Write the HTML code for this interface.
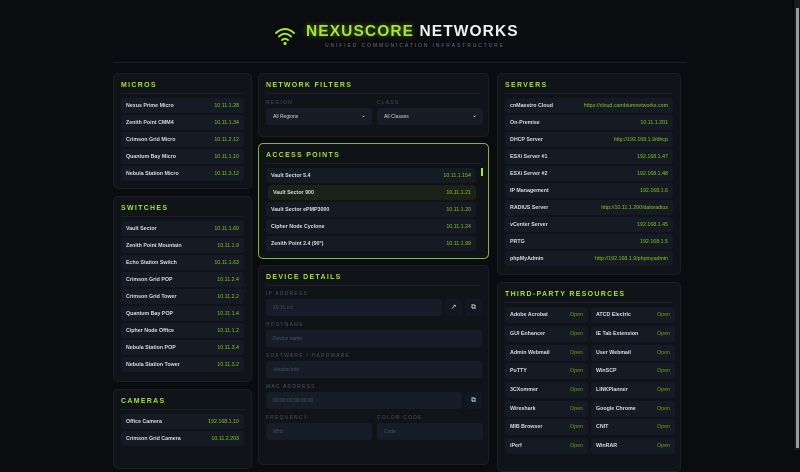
<!DOCTYPE html>
<html><head><meta charset="utf-8"><style>
*{box-sizing:border-box;margin:0;padding:0}
body{width:800px;height:450px;overflow:hidden;background:#0b0c10;font-family:"Liberation Sans",sans-serif;color:#e5e7eb;position:relative}
.sb{position:absolute;left:793px;top:0;width:7px;height:450px;background:#1a1a1a;border-left:1px solid #000}
.sb i{position:absolute;left:2px;top:8px;width:3px;height:440px;background:#9a9a9a}
.h1{position:absolute;left:306px;top:23px;font-size:15.5px;font-weight:bold;letter-spacing:1.1px;color:#f0f0f0;white-space:nowrap}
.h1 b{color:#a3e635;text-shadow:0 0 6px rgba(163,230,53,.5)}
.sub{position:absolute;left:325px;top:43px;font-size:5px;letter-spacing:1.9px;color:#6b7280;white-space:nowrap}
.hr{position:absolute;left:113px;top:62px;width:574px;height:1px;background:#1b1e26}
.p{position:absolute;background:#101318;border:1px solid #1a1e27;border-radius:5px}
.t{position:absolute;left:7px;top:8px;font-size:7px;font-weight:bold;letter-spacing:1.3px;color:#a3e635;white-space:nowrap}
.tl{position:absolute;left:7px;top:19px;right:7px;height:1px;background:#1a1e27}
.r{position:absolute;left:7px;right:7px;height:15px;background:#151a24;border-radius:3px;font-size:5.3px;font-weight:bold;color:#d8dbe2}
.r span{position:absolute;left:5px;top:5px;white-space:nowrap}
.r em{position:absolute;right:5px;top:5px;font-style:normal;font-weight:normal;color:#84cc16;white-space:nowrap}
.lb{position:absolute;font-size:5px;letter-spacing:1.2px;color:#4b5160;white-space:nowrap}
.in{position:absolute;height:17px;background:#171c28;border-radius:3px;font-size:5px;color:#4b5160;padding:6px 7px;white-space:nowrap}
.bt{position:absolute;width:17px;height:17px;background:#131722;border-radius:3px;color:#cfd3da;font-size:7px;text-align:center;line-height:17px}
.g{position:absolute;height:16px;background:#151a24;border-radius:3px;font-size:5.3px;font-weight:bold;color:#d8dbe2}
.g span{position:absolute;left:5px;top:5px;white-space:nowrap}
.g em{position:absolute;right:5px;top:5px;font-style:normal;font-weight:normal;color:#65a30d}
</style></head><body>
<div class="sb"><i></i></div>
<svg style="position:absolute;left:274px;top:25px" width="22" height="21" viewBox="0 0 22 21"><g fill="none" stroke="#a3e635" stroke-width="2" stroke-linecap="round"><path d="M2 8 Q11 0 20 8"/><path d="M5 11.5 Q11 6 17 11.5"/><path d="M8 15 Q11 12.5 14 15"/></g><circle cx="11" cy="18.5" r="1.6" fill="#a3e635"/></svg>
<div class="h1"><b>NEXUSCORE</b> NETWORKS</div>
<div class="sub">UNIFIED COMMUNICATION INFRASTRUCTURE</div>
<div class="hr"></div>

<div class="p" style="left:113px;top:73px;width:139px;height:116px"><div class="t">MICROS</div><div class="tl"></div>
<div class="r" style="top:24px"><span>Nexus Prime Micro</span><em>10.11.1.28</em></div>
<div class="r" style="top:41px"><span>Zenith Point CMM4</span><em>10.11.1.34</em></div>
<div class="r" style="top:58px"><span>Crimson Grid Micro</span><em>10.11.2.12</em></div>
<div class="r" style="top:75px"><span>Quantum Bay Micro</span><em>10.11.1.10</em></div>
<div class="r" style="top:92px"><span>Nebula Station Micro</span><em>10.11.3.12</em></div>
</div>

<div class="p" style="left:113px;top:196px;width:139px;height:186px"><div class="t">SWITCHES</div><div class="tl"></div>
<div class="r" style="top:24px"><span>Vault Sector</span><em>10.11.1.60</em></div>
<div class="r" style="top:41px"><span>Zenith Point Mountain</span><em>10.11.1.9</em></div>
<div class="r" style="top:58px"><span>Echo Station Switch</span><em>10.11.1.63</em></div>
<div class="r" style="top:75px"><span>Crimson Grid POP</span><em>10.11.2.4</em></div>
<div class="r" style="top:92px"><span>Crimson Grid Tower</span><em>10.11.2.2</em></div>
<div class="r" style="top:109px"><span>Quantum Bay POP</span><em>10.11.1.4</em></div>
<div class="r" style="top:126px"><span>Cipher Node Office</span><em>10.11.1.2</em></div>
<div class="r" style="top:143px"><span>Nebula Station POP</span><em>10.11.3.4</em></div>
<div class="r" style="top:160px"><span>Nebula Station Tower</span><em>10.11.3.2</em></div>
</div>

<div class="p" style="left:113px;top:389px;width:139px;height:80px"><div class="t">CAMERAS</div><div class="tl"></div>
<div class="r" style="top:24px"><span>Office Camera</span><em>192.168.1.10</em></div>
<div class="r" style="top:41px"><span>Crimson Grid Camera</span><em>10.11.2.203</em></div>
</div>

<div class="p" style="left:258px;top:73px;width:231px;height:64px"><div class="t">NETWORK FILTERS</div><div class="tl"></div>
<div class="lb" style="left:7px;top:26px">REGION</div><div class="lb" style="left:118px;top:26px">CLASS</div>
<div class="in" style="left:7px;top:34px;width:106px;color:#cfd3da">All Regions<span style="position:absolute;right:6px;top:4px;font-size:6px">⌄</span></div>
<div class="in" style="left:118px;top:34px;width:106px;color:#cfd3da">All Classes<span style="position:absolute;right:6px;top:4px;font-size:6px">⌄</span></div>
</div>

<div class="p" style="left:258px;top:143px;width:231px;height:116px;border:1px solid #84b33a;background:#0f1216"><div class="t">ACCESS POINTS</div><div class="tl"></div>
<div style="position:absolute;left:222px;top:24px;width:2px;height:8px;background:#a3e635"></div>
<div class="r" style="top:24px;right:12px"><span>Vault Sector 5.4</span><em>10.11.1.154</em></div>
<div class="r" style="top:41px;right:12px;left:9px;background:#1c2218"><span>Vault Sector 900</span><em>10.11.1.21</em></div>
<div class="r" style="top:58px;right:12px"><span>Vault Sector ePMP3000</span><em>10.11.1.20</em></div>
<div class="r" style="top:75px;right:12px"><span>Cipher Node Cyclone</span><em>10.11.1.24</em></div>
<div class="r" style="top:92px;right:12px"><span>Zenith Point 2.4 (90°)</span><em>10.11.1.99</em></div>
</div>

<div class="p" style="left:258px;top:265px;width:231px;height:200px"><div class="t">DEVICE DETAILS</div><div class="tl"></div>
<div class="lb" style="left:7px;top:25px">IP ADDRESS</div>
<div class="in" style="left:7px;top:33px;width:176px">10.11.x.x</div>
<div class="bt" style="left:186px;top:33px">↗</div><div class="bt" style="left:206px;top:33px">⧉</div>
<div class="lb" style="left:7px;top:56px">HOSTNAME</div>
<div class="in" style="left:7px;top:64px;width:216px">Device name</div>
<div class="lb" style="left:7px;top:87px">SOFTWARE / HARDWARE</div>
<div class="in" style="left:7px;top:95px;width:216px">Version info</div>
<div class="lb" style="left:7px;top:118px">MAC ADDRESS</div>
<div class="in" style="left:7px;top:126px;width:196px">00:00:00:00:00:00</div>
<div class="bt" style="left:206px;top:126px">⧉</div>
<div class="lb" style="left:7px;top:149px">FREQUENCY</div><div class="lb" style="left:118px;top:149px">COLOR CODE</div>
<div class="in" style="left:7px;top:157px;width:106px">MHz</div>
<div class="in" style="left:118px;top:157px;width:106px">Code</div>
</div>

<div class="p" style="left:497px;top:73px;width:184px;height:202px"><div class="t">SERVERS</div><div class="tl"></div>
<div class="r" style="top:24px"><span>cnMaestro Cloud</span><em>https://cloud.cambiumnetworks.com</em></div>
<div class="r" style="top:41px"><span>On-Premise</span><em>10.11.1.201</em></div>
<div class="r" style="top:58px"><span>DHCP Server</span><em>http://192.168.1.9/dhcp</em></div>
<div class="r" style="top:75px"><span>ESXi Server #1</span><em>192.168.1.47</em></div>
<div class="r" style="top:92px"><span>ESXi Server #2</span><em>192.168.1.48</em></div>
<div class="r" style="top:109px"><span>IP Management</span><em>192.168.1.6</em></div>
<div class="r" style="top:126px"><span>RADIUS Server</span><em>http://10.11.1.200/daloradius</em></div>
<div class="r" style="top:143px"><span>vCenter Server</span><em>192.168.1.45</em></div>
<div class="r" style="top:160px"><span>PRTG</span><em>192.168.1.5</em></div>
<div class="r" style="top:177px"><span>phpMyAdmin</span><em>http://192.168.1.9/phpmyadmin</em></div>
</div>

<div class="p" style="left:497px;top:282px;width:184px;height:190px"><div class="t">THIRD-PARTY RESOURCES</div><div class="tl"></div>
<div class="g" style="left:7px;top:24px;width:83px"><span>Adobe Acrobat</span><em>Open</em></div><div class="g" style="left:93px;top:24px;width:84px"><span>ATCD Electric</span><em>Open</em></div>
<div class="g" style="left:7px;top:43px;width:83px"><span>GUI Enhancer</span><em>Open</em></div><div class="g" style="left:93px;top:43px;width:84px"><span>IE Tab Extension</span><em>Open</em></div>
<div class="g" style="left:7px;top:62px;width:83px"><span>Admin Webmail</span><em>Open</em></div><div class="g" style="left:93px;top:62px;width:84px"><span>User Webmail</span><em>Open</em></div>
<div class="g" style="left:7px;top:80px;width:83px"><span>PuTTY</span><em>Open</em></div><div class="g" style="left:93px;top:80px;width:84px"><span>WinSCP</span><em>Open</em></div>
<div class="g" style="left:7px;top:99px;width:83px"><span>3CXommer</span><em>Open</em></div><div class="g" style="left:93px;top:99px;width:84px"><span>LINKPlanner</span><em>Open</em></div>
<div class="g" style="left:7px;top:118px;width:83px"><span>Wireshark</span><em>Open</em></div><div class="g" style="left:93px;top:118px;width:84px"><span>Google Chrome</span><em>Open</em></div>
<div class="g" style="left:7px;top:136px;width:83px"><span>MIB Browser</span><em>Open</em></div><div class="g" style="left:93px;top:136px;width:84px"><span>CNIT</span><em>Open</em></div>
<div class="g" style="left:7px;top:155px;width:83px"><span>iPerf</span><em>Open</em></div><div class="g" style="left:93px;top:155px;width:84px"><span>WinRAR</span><em>Open</em></div>
</div>
</body></html>
